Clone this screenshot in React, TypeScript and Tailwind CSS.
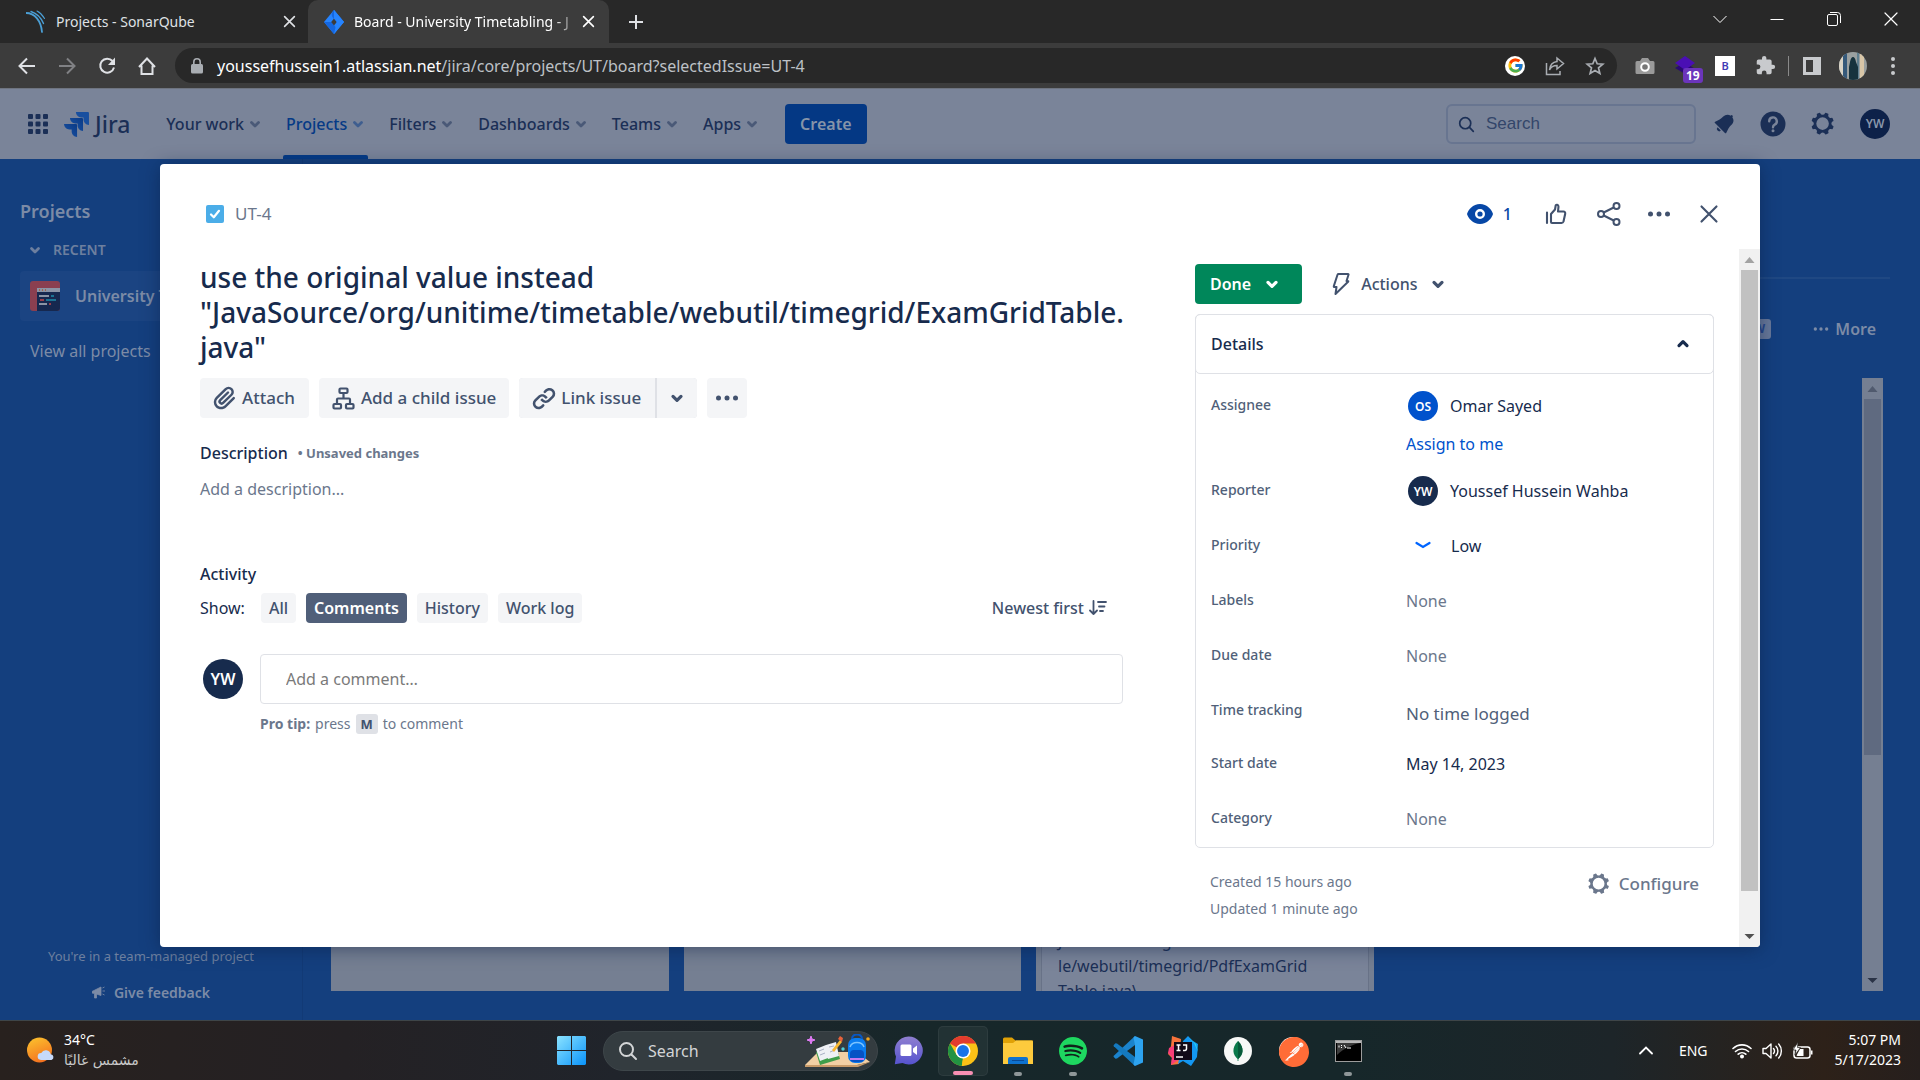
import type { ReactNode } from "react";
import { FcGoogle } from "react-icons/fc";
import { SiSpotify, SiPostman } from "react-icons/si";

const UI = "font-['Noto_Sans','Open_Sans',sans-serif]";

function Chevron({ size = 10, className = "", up = false, w = 2 }: { size?: number; className?: string; up?: boolean; w?: number }) {
  return (
    <svg width={size} height={size} viewBox="0 0 10 10" fill="none" stroke="currentColor" strokeWidth={w} strokeLinecap="round" strokeLinejoin="round" className={className} aria-hidden="true">
      <path d={up ? "M2.500 6 5 3.500l2.500 2.500" : "M2.500 4 5 6.500l2.500-2.500"} />
    </svg>
  );
}

function Cross({ size, w = 1.6 }: { size: number; w?: number }) {
  return (
    <svg width={size} height={size} viewBox="0 0 16 16" stroke="currentColor" strokeWidth={w} strokeLinecap="round" aria-hidden="true">
      <path d="M2 2l12 12M14 2 2 14" />
    </svg>
  );
}

function Dots({ size = 24 }: { size?: number }) {
  return (
    <svg width={size} height={size} viewBox="0 0 24 24" fill="currentColor" aria-hidden="true">
      <circle cx="3.5" cy="12" r="2.5" />
      <circle cx="12" cy="12" r="2.5" />
      <circle cx="20.5" cy="12" r="2.5" />
    </svg>
  );
}

function Gear({ size = 28 }: { size?: number }) {
  return (
    <svg width={size} height={size} viewBox="0 0 24 24" fill="currentColor" aria-hidden="true">
      <path d="M11.701 16.7a5.002 5.002 0 110-10.003 5.002 5.002 0 010 10.004m8.368-3.117a1.995 1.995 0 01-1.346-1.885c0-.876.563-1.613 1.345-1.885a.48.48 0 00.315-.574 8.947 8.947 0 00-.836-1.993.477.477 0 00-.598-.195 2.04 2.04 0 01-1.29.08 1.988 1.988 0 01-1.404-1.395 2.04 2.04 0 01.076-1.297.478.478 0 00-.196-.597 8.98 8.98 0 00-1.975-.826.479.479 0 00-.574.314 1.995 1.995 0 01-1.885 1.346 1.994 1.994 0 01-1.884-1.345.482.482 0 00-.575-.315c-.708.2-1.379.485-2.004.842a.47.47 0 00-.198.582A2.002 2.002 0 014.445 7.06a.478.478 0 00-.595.196 8.946 8.946 0 00-.833 1.994.48.48 0 00.308.572 1.995 1.995 0 011.323 1.877c0 .867-.552 1.599-1.324 1.877a.479.479 0 00-.308.57 8.99 8.99 0 00.723 1.79.477.477 0 00.624.194c.595-.273 1.343-.264 2.104.238.117.077.225.185.302.3.527.8.512 1.58.198 2.188a.473.473 0 00.168.628 8.946 8.946 0 002.11.897.474.474 0 00.57-.313 1.995 1.995 0 011.886-1.353c.878 0 1.618.567 1.887 1.353a.475.475 0 00.57.313 8.964 8.964 0 002.084-.883.473.473 0 00.167-.631c-.318-.608-.337-1.393.191-2.195.077-.116.185-.225.302-.302.772-.511 1.527-.513 2.125-.23a.477.477 0 00.628-.19 8.925 8.925 0 00.728-1.793.478.478 0 00-.314-.573" />
    </svg>
  );
}

function Magnifier({ size, w = 2 }: { size: number; w?: number }) {
  return (
    <svg width={size} height={size} viewBox="0 0 20 20" fill="none" stroke="currentColor" strokeWidth={w} strokeLinecap="round" className="shrink-0" aria-hidden="true">
      <circle cx="8.5" cy="8.5" r="6.5" />
      <path d="M13.5 13.5 18 18" />
    </svg>
  );
}

function JiraDiamond() {
  return (
    <svg width="20" height="24" viewBox="0 0 20 24" className="shrink-0" aria-hidden="true">
      <path d="M10 0 20 12 10 24 0 12z" fill="#2684ff" />
      <path d="M10 0c-3 3-3 6 0 9l2.500 3L20 12z" fill="#1567e0" />
      <path d="M10 24c3-3 3-6 0-9l-2.500-3L0 12z" fill="#1567e0" />
      <path d="M10 8.500 12.800 12 10 15.500 7.200 12z" fill="#3c3c3c" />
      <path d="M10 0 20 12 10 24 12.800 12 10 8.500z" fill="#2684ff" />
    </svg>
  );
}

function BrowserTabs() {
  return (
    <div className="flex h-[43px] items-stretch bg-[#282828] text-[#dfe1e5]">
      <div className="flex w-[308px] items-center pl-[26px] pr-[10px]">
        <svg width="20" height="24" viewBox="0 0 20 24" fill="none" stroke="#4b9fd5" strokeLinecap="round" aria-hidden="true">
          <path d="M0 3c9 0 15 8 16 19" strokeWidth="1.800" />
          <path d="M5 1.500c6 2 10 6 12.500 12" strokeWidth="1.400" />
          <path d="M11 1c3 1.500 5.500 4 7.500 7.500" strokeWidth="1.100" />
        </svg>
        <span className="ml-[10px] flex-1 truncate text-[14px]">Projects - SonarQube</span>
        <button aria-label="Close tab" className="p-[2px]"><Cross size={13} w={2} /></button>
      </div>
      <div className="flex w-[301px] items-center rounded-t-[10px] bg-[#3c3c3c] pl-4 pr-3 text-white">
        <JiraDiamond />
        <span className="ml-[10px] w-[222px] whitespace-nowrap text-[14px] [mask-image:linear-gradient(to_right,black_90%,transparent_102%)]">Board - University Timetabling - J</span>
        <button aria-label="Close tab" className="ml-auto p-[2px]"><Cross size={13} w={2} /></button>
      </div>
      <button aria-label="New tab" className="ml-[18px]">
        <svg width="18" height="18" viewBox="0 0 18 18" stroke="currentColor" strokeWidth="2" aria-hidden="true"><path d="M9 2v14M2 9h14" /></svg>
      </button>
      <div className="ml-auto flex pb-[6px] pr-px text-white">
        <button aria-label="Search tabs" className="grid w-[57px] place-items-center">
          <svg width="14" height="14" viewBox="0 0 14 14" fill="none" stroke="currentColor" aria-hidden="true"><path d="M.5 4 7 10.500 13.500 4" /></svg>
        </button>
        <button aria-label="Minimize" className="grid w-[57px] place-items-center">
          <svg width="14" height="14" viewBox="0 0 14 14" stroke="currentColor" aria-hidden="true"><path d="M.5 7.500h13" /></svg>
        </button>
        <button aria-label="Restore" className="grid w-[57px] place-items-center">
          <svg width="14" height="14" viewBox="0 0 14 14" fill="none" stroke="currentColor" aria-hidden="true"><rect x=".5" y="2.500" width="10" height="11" rx="1.500" /><path d="M3 .5h7.500a3 3 0 0 1 3 3V11" /></svg>
        </button>
        <button aria-label="Close window" className="grid w-[57px] place-items-center"><Cross size={16} w={1.2} /></button>
      </div>
    </div>
  );
}

function BrowserToolbar() {
  return (
    <div className="flex h-[46px] items-center border-b border-[#6e7480] bg-[#3c3c3c] pl-[17px] pr-[25px] text-[#dfe1e5]">
      <div className="flex w-[158px] gap-5">
        <button aria-label="Back"><svg width="20" height="20" viewBox="0 0 20 20" fill="none" stroke="currentColor" strokeWidth="2" aria-hidden="true"><path d="M18 10H3M10 2.500 2.500 10l7.500 7.500" /></svg></button>
        <button aria-label="Forward" className="text-[#808184]"><svg width="20" height="20" viewBox="0 0 20 20" fill="none" stroke="currentColor" strokeWidth="2" aria-hidden="true"><path d="M2 10h15M10 2.500l7.500 7.500-7.500 7.500" /></svg></button>
        <button aria-label="Reload"><svg width="20" height="20" viewBox="0 0 20 20" fill="none" stroke="currentColor" strokeWidth="2" aria-hidden="true"><path d="M17 11.500A7 7 0 1 1 15.500 5" /><path d="M18 1.500V9h-7z" fill="currentColor" stroke="none" /></svg></button>
        <button aria-label="Home"><svg width="20" height="20" viewBox="0 0 20 20" fill="none" stroke="currentColor" strokeWidth="2" aria-hidden="true"><path d="M4.500 9.500V18h11V9.500M2 11l8-8.500 8 8.500" /></svg></button>
      </div>
      <div className="flex h-[35px] flex-1 items-center rounded-full bg-[#282828] pl-4 pr-3">
        <svg width="12" height="16" viewBox="0 0 12 16" fill="#a9adb2" aria-hidden="true"><rect y="6" width="12" height="9.500" rx="1.500" /><path d="M2.800 7V4a3.200 3.200 0 0 1 6.400 0v3" fill="none" stroke="#a9adb2" strokeWidth="1.600" /></svg>
        <p className="ml-[14px] flex-1 text-[16px] text-[#bdc1c6]"><span className="text-white">youssefhussein1.atlassian.net</span>/jira/core/projects/UT/board?selectedIssue=UT-4</p>
        <div className="flex items-center gap-5">
          <span className="grid size-5 place-items-center rounded-full bg-white"><FcGoogle size={17} /></span>
          <button aria-label="Share"><svg width="20" height="20" viewBox="0 0 20 20" fill="none" stroke="#a9adb2" strokeWidth="1.500" aria-hidden="true"><path d="M1.500 7v11.500H15V15M12 5.500V2l6.500 5.500L12 13V9.500c-4 0-6 1-7.500 4.500C5 9 7.500 6 12 5.500z" /></svg></button>
          <button aria-label="Bookmark"><svg width="20" height="20" viewBox="0 0 20 20" fill="none" stroke="#a9adb2" strokeWidth="1.700" aria-hidden="true"><path d="m10 2.500 2.200 5.300 5.600.4-4.300 3.700 1.400 5.600L10 14.500l-4.900 3 1.400-5.600-4.300-3.700 5.600-.4z" /></svg></button>
        </div>
      </div>
      <div className="ml-[18px] flex items-center">
        <svg width="20" height="20" viewBox="0 0 20 20" aria-hidden="true"><path d="M2 5h3l2-3h6l2 3h3a1.500 1.500 0 0 1 1.500 1.500v10A1.500 1.500 0 0 1 18 18H2a1.500 1.500 0 0 1-1.500-1.500v-10A1.500 1.500 0 0 1 2 5z" fill="#9a9a9a" /><circle cx="10" cy="11" r="3.800" fill="#777" stroke="#fff" strokeWidth="2" /></svg>
        <span className="relative ml-5 h-5 w-5">
          <svg width="20" height="20" viewBox="0 0 20 20" aria-hidden="true"><path d="m10 6 10 7-8 6L0 12z" fill="#2a0a72" /><path d="m10 0 10 7-10 7L0 7z" fill="#4a0fb4" /></svg>
          <span className="absolute left-2 top-3 rounded-[3px] bg-[#6b35bb] px-[3px] text-[12px] font-bold leading-[15px] text-white">19</span>
        </span>
        <span className="ml-5 grid h-5 w-5 place-items-center bg-white text-[11px] font-semibold leading-none text-[#3f3bb5]">B</span>
        <svg className="ml-5" width="21" height="21" viewBox="0 0 24 24" fill="#c8cacd" aria-hidden="true"><path d="M20.500 11H19V7a2 2 0 0 0-2-2h-4V3.500a2.500 2.500 0 0 0-5 0V5H4a2 2 0 0 0-2 2v3.800h1.500a2.700 2.700 0 0 1 0 5.400H2V20a2 2 0 0 0 2 2h3.800v-1.500a2.700 2.700 0 0 1 5.400 0V22H17a2 2 0 0 0 2-2v-4h1.500a2.500 2.500 0 0 0 0-5z" /></svg>
        <span className="ml-3 h-5 w-px bg-[#8a8a8a]" />
        <svg className="ml-[14px]" width="18" height="18" viewBox="0 0 18 18" aria-hidden="true"><path d="M0 0h18v18H0z" fill="#c8cacd" /><path d="M3 3h7v12H3z" fill="#3c3c3c" /></svg>
        <svg className="ml-[18px]" width="28" height="28" viewBox="0 0 28 28" aria-hidden="true">
          <defs><clipPath id="profile"><circle cx="14" cy="14" r="14" /></clipPath></defs>
          <g clipPath="url(#profile)"><path d="M0 0h28v28H0z" fill="#9aa0a0" /><path d="M0 0h5v28H0z" fill="#d9d4c7" /><path d="M4 0h4v28H4z" fill="#35597a" /><path d="M18 0h2v28h-2z" fill="#5f7f8f" /><path d="M21 0h4v28h-4z" fill="#d8c6a8" /><path d="M10 28V15l1-5q1-5 3-5t3 5l2 5v13z" fill="#16323d" /></g>
        </svg>
        <svg className="ml-6" width="4" height="18" viewBox="0 0 4 18" fill="#c8cacd" aria-hidden="true"><circle cx="2" cy="2" r="2" /><circle cx="2" cy="9" r="2" /><circle cx="2" cy="16" r="2" /></svg>
      </div>
    </div>
  );
}

const navItems = ["Your work", "Projects", "Filters", "Dashboards", "Teams", "Apps"];

function JiraHeader() {
  return (
    <header className="flex h-[70px] shrink-0 items-center bg-[#7a8499] pl-7 pr-[30px] text-[#1b2f56]">
      <button aria-label="Switch apps">
        <svg width="20" height="20" viewBox="0 0 20 20" fill="currentColor" aria-hidden="true">
          {[0, 7.5, 15].map((y) => [0, 7.5, 15].map((x) => <rect key={`${x}-${y}`} x={x} y={y} width="5" height="5" rx="1" />))}
        </svg>
      </button>
      <a href="#home" className="ml-[15px] flex items-center gap-[5px]">
        <svg width="27" height="27" viewBox="12 12 104 104" aria-hidden="true">
          <defs><linearGradient id="jl" x1="1" y1="0" x2="0" y2="1"><stop offset="0" stopColor="#0a3a86" /><stop offset=".8" stopColor="#184f9f" /></linearGradient></defs>
          <path fill="#184f9f" d="M108.023 16H61.805c0 11.520 9.324 20.848 20.847 20.848h8.500v8.226c0 11.520 9.328 20.848 20.848 20.848V19.977A3.980 3.980 0 00108.023 16z" />
          <path fill="url(#jl)" d="M85.121 39.040H38.902c0 11.519 9.325 20.847 20.844 20.847h8.504v8.226c0 11.520 9.328 20.848 20.848 20.848V43.016a3.983 3.983 0 00-3.977-3.977z" />
          <path fill="url(#jl)" d="M62.219 62.078H16c0 11.524 9.324 20.848 20.848 20.848h8.500v8.230c0 11.520 9.328 20.844 20.847 20.844V66.059a3.984 3.984 0 00-3.976-3.980z" />
        </svg>
        <span className="text-[23px] font-medium leading-none">Jira</span>
      </a>
      <nav className="ml-6 flex items-stretch self-stretch text-[16px] font-medium">
        {navItems.map((item) => (
          <button key={item} className={item === "Projects" ? "relative mx-[9px] flex items-center gap-1 px-[3px] text-[#053a86]" : "mx-3 flex items-center gap-1"}>
            {item}
            <Chevron size={14} className="opacity-50" />
            {item === "Projects" && <span className="absolute inset-x-0 bottom-0 h-1 rounded-t-[2px] bg-[#053a86]" />}
          </button>
        ))}
      </nav>
      <button className="ml-[14px] h-10 rounded-[4px] bg-[#043884] px-[15px] text-[16px] font-semibold text-[#8694a9]">Create</button>
      <label className="ml-auto flex h-10 w-[250px] items-center gap-[11px] rounded-[6px] border-2 border-[#687590] px-[10px]">
        <Magnifier size={17} />
        <input aria-label="Search" placeholder="Search" className="w-full min-w-0 bg-transparent font-['Liberation_Sans',sans-serif] text-[17px] outline-none placeholder:text-[#33466a]" />
      </label>
      <div className="ml-[14px] flex items-center gap-[22px]">
        <button aria-label="Notifications">
          <svg width="28" height="28" viewBox="0 0 24 24" fill="currentColor" aria-hidden="true"><path d="M6.485 17.669a2 2 0 002.829 0l-2.829-2.830a2 2 0 000 2.830zm4.897-12.191l-.725.725c-.782.782-2.210 1.813-3.206 2.311l-3.017 1.509c-.495.248-.584.774-.187 1.171l8.556 8.556c.398.396.922.313 1.171-.188l1.510-3.016c.494-.988 1.526-2.420 2.311-3.206l.725-.726a5.048 5.048 0 00.640-6.356 1.010 1.010 0 10-1.354-1.494c-.023.025-.046.049-.066.075a5.043 5.043 0 00-2.788-.840 5.036 5.036 0 00-3.570 1.478z" /></svg>
        </button>
        <button aria-label="Help">
          <svg width="26" height="26" viewBox="0 0 26 26" aria-hidden="true"><circle cx="13" cy="13" r="12.500" fill="currentColor" /><path d="M9.200 10.200a3.800 3.800 0 1 1 5.500 3.400c-1.200.6-1.700 1.100-1.700 2.600" fill="none" stroke="#7a8499" strokeWidth="2.400" strokeLinecap="round" /><circle cx="13" cy="19.800" r="1.500" fill="#7a8499" /></svg>
        </button>
        <button aria-label="Settings"><Gear size={30} /></button>
        <button aria-label="Profile" className="grid size-[30px] place-items-center rounded-full bg-[#0d2149] text-[12px] font-semibold text-[#8a97ab]">YW</button>
      </div>
    </header>
  );
}

function Sidebar() {
  return (
    <aside className="flex w-[303px] shrink-0 flex-col border-r border-[#123a76] pl-5 pt-[38px] text-[#7c8ba6]">
      <h2 className="text-[18px] font-semibold leading-7">Projects</h2>
      <button className="mt-[13px] flex items-center gap-[11px] pl-2 text-[14px] font-semibold leading-6 text-[#6d7f9f]">
        <Chevron size={14} />
        RECENT
      </button>
      <a href="#project" className="mt-[9px] flex h-[50px] items-center gap-[15px] rounded-[4px] bg-[#1b4482] pl-[10px] text-[16px] font-semibold whitespace-nowrap">
        <svg width="30" height="30" viewBox="0 0 30 30" className="shrink-0" aria-hidden="true">
          <rect width="30" height="30" rx="3" fill="#8a3f50" />
          <path d="M7 7h23v20a3 3 0 0 1-3 3H7z" fill="#16284f" />
          <path d="M7 7h23v4H7z" fill="#8b94a6" />
          <path d="M9 9h1M12 9h1M15 9h1" stroke="#a8552f" strokeWidth="1.500" />
          <path d="M9 15h10M9 23h8" stroke="#8b94a6" strokeWidth="2" />
          <path d="M21 15h3M16 19h10" stroke="#1c7393" strokeWidth="2" />
          <path d="M10 19h4M19 23h2" stroke="#9b3f4c" strokeWidth="2" />
        </svg>
        University T
      </a>
      <a href="#projects" className="mt-4 pl-[10px] text-[16px] leading-7">View all projects</a>
      <div className="mt-auto flex flex-col items-center pb-[15px] pr-5">
        <p className="text-[13px] leading-5 text-[#6d7f9f]">You're in a team-managed project</p>
        <button className="mt-[15px] flex items-center gap-2 text-[14px] font-semibold leading-6">
          <svg width="14" height="14" viewBox="0 0 14 14" fill="currentColor" aria-hidden="true"><path d="M0 5.500 9 1v8.500L4.500 8v4H2.500V7.500L0 7zM10.500 2l2-1M10.500 5H13M10.500 8l2 1" stroke="currentColor" strokeWidth=".8" /></svg>
          Give feedback
        </button>
      </div>
    </aside>
  );
}

function ScrollBar({ track, thumb, upArrow, downArrow, thumbClass, className }: { track: string; thumb: string; upArrow: string; downArrow: string; thumbClass: string; className: string }) {
  return (
    <div className={`flex w-[21px] shrink-0 flex-col items-center ${track} ${className}`} aria-hidden="true">
      <svg width="21" height="21" viewBox="0 0 21 21" className={upArrow} fill="currentColor"><path d="m10.500 8 5 6h-10z" /></svg>
      <div className={`w-[17px] ${thumb} ${thumbClass}`} />
      <svg width="21" height="21" viewBox="0 0 21 21" className={`mt-auto ${downArrow}`} fill="currentColor"><path d="m10.500 13 5-5h-10z" /></svg>
    </div>
  );
}

function Board() {
  return (
    <main className="flex min-w-0 flex-1 flex-col pb-[29px] pl-7 pr-[30px] text-[#7c8ba6]">
      <div className="h-[120px] border-b-2 border-[#1f4883]" />
      <div className="flex h-[99px] items-center justify-end pr-[14px]">
        <span className="grid h-5 w-6 place-items-center rounded-[3px] bg-[#69799a] text-[12px] font-bold text-[#26468a]">W</span>
        <button className="ml-[42px] flex items-center gap-[6px] text-[16px] font-semibold"><Dots size={16} />More</button>
      </div>
      <div className="flex min-h-0 flex-1 gap-[15px] pr-[7px]">
        <div className="w-[338px] bg-[#757f92]" />
        <div className="w-[337px] bg-[#757f92]" />
        <div className="flex w-[338px] flex-col justify-end overflow-hidden bg-[#757f92] px-[5px]">
          <p className="-mb-[13px] flex-1 content-end break-all border-x border-[#687287] bg-[#7a8499] px-4 text-[16px] leading-[25px] text-[#1b2f56]">
            JavaSource/org/unitime/timetab<br />le/webutil/timegrid/PdfExamGrid<br />Table.java\
          </p>
        </div>
        <ScrollBar className="ml-auto" track="bg-[#757f92]" thumb="bg-[#5f6a80]" upArrow="text-[#505a6e]" downArrow="text-[#2a3346]" thumbClass="h-[58%]" />
      </div>
    </main>
  );
}

const BTN = "flex h-10 items-center rounded-[4px] bg-[#f4f5f7] text-[17px] font-medium text-[#42526e]";

function IssueMain() {
  return (
    <section className="flex min-w-0 flex-1 flex-col pb-10 pl-10 pr-[72px] text-[#172b4d]">
      <h1 className="mt-[11px] whitespace-nowrap text-[28px] font-medium leading-[35px]">
        use the original value instead<br />"JavaSource/org/unitime/timetable/webutil/timegrid/ExamGridTable.<br />java"
      </h1>
      <div className="mt-[13px] flex gap-[10px]">
        <button className={`${BTN} gap-[2px] pl-[10px] pr-[14px]`}>
          <svg width="30" height="30" viewBox="0 0 24 24" fill="currentColor" aria-hidden="true"><path d="M11.643 17.965c-1.530 1.495-4.016 1.496-5.542.004a3.773 3.773 0 01.002-5.412l7.147-6.985a2.316 2.316 0 013.233-.003c.893.873.895 2.282.004 3.153l-6.703 6.550a.653.653 0 01-.914-.008.620.620 0 010-.902l6.229-6.087a.941.941 0 000-1.353.995.995 0 00-1.384 0l-6.230 6.087a2.502 2.502 0 000 3.607 2.643 2.643 0 003.683.009l6.703-6.550a4.074 4.074 0 00-.003-5.859 4.306 4.306 0 00-6.002.003l-7.148 6.985a5.655 5.655 0 00-.001 8.118c2.290 2.240 6.015 2.238 8.310-.005l6.686-6.533a.941.941 0 000-1.353.995.995 0 00-1.384 0l-6.686 6.534z" /></svg>
          Attach
        </button>
        <button className={`${BTN} gap-[6px] px-[13px]`}>
          <svg width="23" height="23" viewBox="0 0 23 23" fill="none" stroke="currentColor" strokeWidth="2.200" strokeLinejoin="round" aria-hidden="true"><rect x="7.500" y="1.500" width="8" height="4.500" rx="1" /><rect x="1.500" y="17" width="7.500" height="4.500" rx="1" /><rect x="14" y="17" width="7.500" height="4.500" rx="1" /><path d="M11.500 6v5.500M5 17v-4.500a1 1 0 0 1 1-1h11a1 1 0 0 1 1 1V17" /></svg>
          Add a child issue
        </button>
        <div className="flex gap-[2px] rounded-[4px] bg-[#dfe1e6]">
          <button className={`${BTN} gap-[2px] rounded-r-none pl-[10px] pr-[14px]`}>
            <svg width="30" height="30" viewBox="0 0 24 24" fill="currentColor" aria-hidden="true"><path d="M12.856 5.457l-.937.920a1.002 1.002 0 000 1.437 1.047 1.047 0 001.463 0l.984-.966c.967-.950 2.542-1.135 3.602-.288a2.540 2.540 0 01.203 3.810l-2.903 2.852a2.646 2.646 0 01-3.696 0l-1.110-1.090L9 13.570l1.108 1.089c1.822 1.788 4.802 1.788 6.622 0l2.905-2.852a4.558 4.558 0 00-.357-6.820c-1.893-1.517-4.695-1.226-6.422.470M11.144 19.543l.937-.920a1.002 1.002 0 000-1.437 1.047 1.047 0 00-1.462 0l-.985.966c-.967.950-2.542 1.135-3.602.288a2.540 2.540 0 01-.203-3.810l2.903-2.852a2.646 2.646 0 013.696 0l1.110 1.090L15 11.430l-1.108-1.089c-1.822-1.788-4.802-1.788-6.622 0l-2.905 2.852a4.558 4.558 0 00.357 6.820c1.893 1.517 4.695 1.226 6.422-.470" /></svg>
            Link issue
          </button>
          <button aria-label="More link options" className={`${BTN} w-10 justify-center rounded-l-none`}><Chevron size={16} /></button>
        </div>
        <button aria-label="More actions" className={`${BTN} w-10 justify-center`}><Dots /></button>
      </div>
      <div className="mt-[21px] flex items-center gap-[10px] leading-7">
        <h2 className="text-[16px] font-medium">Description</h2>
        <span className="text-[13px] font-bold text-[#6b778c]">• Unsaved changes</span>
      </div>
      <p className="mt-2 text-[16px] leading-7 text-[#6b778c]">Add a description...</p>
      <h2 className="mt-[57px] text-[16px] font-medium leading-7">Activity</h2>
      <div className="mt-[5px] flex h-[30px] items-center text-[16px]">
        <span className="mr-4">Show:</span>
        <div className="flex gap-[10px] font-medium text-[#42526e]">
          <button className="h-[30px] rounded-[4px] bg-[#f4f5f7] px-2">All</button>
          <button className="h-[30px] rounded-[4px] bg-[#505f79] px-2 font-semibold text-white">Comments</button>
          <button className="h-[30px] rounded-[4px] bg-[#f4f5f7] px-2">History</button>
          <button className="h-[30px] rounded-[4px] bg-[#f4f5f7] px-2">Work log</button>
        </div>
        <button className="ml-auto mr-4 flex items-center gap-[5px] font-medium text-[#42526e]">
          Newest first
          <svg width="18" height="16" viewBox="0 0 18 16" fill="none" stroke="currentColor" strokeWidth="1.800" strokeLinecap="round" strokeLinejoin="round" aria-hidden="true"><path d="M4.500 1v13M1 10.500 4.500 14 8 10.500M9 2h8M10 6.500h5.500M11 11h3" /></svg>
        </button>
      </div>
      <div className="mt-[31px] flex gap-[17px] pl-[3px]">
        <span className="mt-[5px] grid size-10 shrink-0 place-items-center rounded-full bg-[#172b4d] text-[16px] font-semibold text-white">YW</span>
        <div className="min-w-0 flex-1">
          <input aria-label="Add a comment" placeholder="Add a comment…" className="h-[50px] w-full rounded-[4px] border border-[#dfe1e6] px-[25px] text-[16px] outline-none placeholder:text-[#7a7a7a]" />
          <p className="mt-2 flex items-center gap-[5px] text-[14px] leading-6 text-[#6b778c]">
            <b>Pro tip:</b>press<kbd className={`${UI} rounded-[3px] bg-[#dfe1e6] px-[5px] text-[13px] font-bold leading-5 text-[#42526e]`}>M</kbd>to comment
          </p>
        </div>
      </div>
    </section>
  );
}

function Field({ label, height, children }: { label: string; height: string; children: ReactNode }) {
  return (
    <div className={`flex ${height}`}>
      <dt className="w-[195px] shrink-0 text-[14px] font-medium leading-[30px] text-[#505f79]">{label}</dt>
      <dd className="text-[16px] leading-8">{children}</dd>
    </div>
  );
}

function Person({ initials, name, bg }: { initials: string; name: string; bg: string }) {
  return (
    <span className="flex items-center gap-3 pl-[2px]">
      <span className={`grid size-[30px] place-items-center rounded-full text-[12px] font-semibold text-white ${bg}`}>{initials}</span>
      {name}
    </span>
  );
}

function IssueDetails() {
  return (
    <section className="w-[544px] shrink-0 pr-[25px] text-[#172b4d]">
      <div className="mt-[15px] flex">
        <button className="flex h-10 items-center gap-[13px] rounded-[4px] bg-[#00875a] pl-[15px] pr-[22px] text-[16px] font-semibold text-white">Done<Chevron size={16} /></button>
        <button className="ml-[29px] flex items-center text-[16px] font-medium text-[#42526e]">
          <svg width="20" height="24" viewBox="0 0 20 24" fill="none" stroke="currentColor" strokeWidth="2" strokeLinejoin="round" aria-hidden="true"><path d="M7.500 2H17q.8 0 .5.800L15.500 9h1.300q.9 0 .3.800L4.500 22 5.500 15H3.500q-.9 0-.7-.900L6.500 2.800Q6.800 2 7.500 2z" /></svg>
          <span className="ml-[10px] mr-3">Actions</span>
          <Chevron size={16} />
        </button>
      </div>
      <div className="mt-[10px] rounded-[5px] border border-[#dfe1e6]">
        <button className="-m-px flex h-[60px] w-[calc(100%+2px)] items-center justify-between rounded-[5px] border border-[#dfe1e6] pl-[15px] pr-[22px] text-[16px] font-medium">
          Details
          <Chevron size={16} up />
        </button>
        <dl className="pb-3 pl-[15px] pt-[17px]">
          <Field label="Assignee" height="h-[85px]">
            <Person initials="OS" name="Omar Sayed" bg="bg-[#0052cc]" />
            <a href="#assign" className="mt-[6px] block text-[#0052cc]">Assign to me</a>
          </Field>
          <Field label="Reporter" height="h-[55px]"><Person initials="YW" name="Youssef Hussein Wahba" bg="bg-[#172b4d]" /></Field>
          <Field label="Priority" height="h-[55px]"><span className="flex items-center gap-5 pl-[9px]"><svg width="16" height="10" viewBox="0 0 16 10" fill="none" stroke="#0065ff" strokeWidth="2.200" strokeLinecap="round" aria-hidden="true"><path d="m1.500 2 6.500 4 6.500-4" /></svg>Low</span></Field>
          <Field label="Labels" height="h-[55px]"><span className="text-[#6b778c]">None</span></Field>
          <Field label="Due date" height="h-[55px]"><span className="text-[#6b778c]">None</span></Field>
          <Field label="Time tracking" height="h-[53px]"><span className="block pt-[3px] text-[17px] text-[#505f79]">No time logged</span></Field>
          <Field label="Start date" height="h-[55px]">May 14, 2023</Field>
          <Field label="Category" height="h-8"><span className="text-[#6b778c]">None</span></Field>
        </dl>
      </div>
      <div className="mt-5 flex items-start justify-between pl-[15px] pr-[15px] text-[#6b778c]">
        <p className="text-[14px] leading-[27px]">Created 15 hours ago<br />Updated 1 minute ago</p>
        <button className="flex items-center gap-[6px] text-[17px] font-medium leading-8"><Gear size={28} />Configure</button>
      </div>
    </section>
  );
}

function IssueDialog() {
  return (
    <div role="dialog" aria-label="UT-4" className="flex h-full flex-col overflow-hidden rounded-[4px] bg-white shadow-[0_2px_18px_rgba(9,30,66,0.5)]">
      <div className="flex h-[85px] shrink-0 items-center pl-[46px] pr-[41px] pt-[15px] text-[#42526e]">
        <svg width="18" height="18" viewBox="0 0 18 18" aria-hidden="true"><rect width="18" height="18" rx="2" fill="#4bade8" /><path d="m5 9.500 2.800 2.800L13 5.800" fill="none" stroke="#fff" strokeWidth="2.200" strokeLinecap="round" strokeLinejoin="round" /></svg>
        <a href="#UT-4" className="ml-[11px] text-[17px] text-[#6b778c]">UT-4</a>
        <button aria-label="Watchers: 1" className="ml-auto flex items-center gap-[10px] text-[16px] font-medium text-[#0747a6]">
          <svg width="26" height="20" viewBox="0 0 26 20" aria-hidden="true"><path d="M13 0C6 0 1 6 0 10c1 4 6 10 13 10s12-6 13-10C25 6 20 0 13 0z" fill="#0747a6" /><circle cx="13" cy="10" r="3.800" fill="none" stroke="#fff" strokeWidth="2.400" /></svg>
          1
        </button>
        <button aria-label="Vote" className="ml-[33px]">
          <svg width="22" height="22" viewBox="0 0 22 22" fill="none" stroke="currentColor" strokeWidth="2.100" strokeLinejoin="round" strokeLinecap="round" aria-hidden="true"><path d="M2 9.500V20M6 19V11l4-4.500.700-4c.200-1.200 2.800-1 2.800 1.200L13 8.500h5.500a1.800 1.800 0 0 1 1.700 2.200L18.500 18.500A2.200 2.200 0 0 1 16.500 20H7a1 1 0 0 1-1-1z" /></svg>
        </button>
        <button aria-label="Share" className="ml-[30px]">
          <svg width="24" height="24" viewBox="0 0 24 24" fill="none" stroke="currentColor" strokeWidth="2" aria-hidden="true"><circle cx="4" cy="12" r="3" /><circle cx="19.500" cy="4" r="3" /><circle cx="19.500" cy="20" r="3" /><path d="m6.700 10.500 10-5M6.700 13.500l10 5" /></svg>
        </button>
        <button aria-label="More" className="ml-[26px]"><Dots /></button>
        <button aria-label="Close" className="ml-[28px]"><Cross size={20} w={1.7} /></button>
      </div>
      <div className="flex min-h-0 flex-1">
        <IssueMain />
        <IssueDetails />
        <ScrollBar className="h-full" track="bg-[#f1f1f1]" thumb="bg-[#c1c1c1]" upArrow="text-[#a3a3a3]" downArrow="text-[#505050]" thumbClass="h-[89%]" />
      </div>
    </div>
  );
}

function Slot({ label, active, dot, children }: { label: string; active?: boolean; dot?: boolean; children: ReactNode }) {
  return (
    <button aria-label={label} className={active ? "relative grid size-[50px] place-items-center rounded-[5px] border border-white/5 bg-white/5" : "relative grid size-[50px] place-items-center"}>
      {children}
      {active && <span className="absolute bottom-0 left-[14px] h-1 w-5 rounded-full bg-[#f78fb3]" />}
      {dot && <span className="absolute bottom-0 left-[21px] h-1 w-2 rounded-full bg-[#8f9799]" />}
    </button>
  );
}

function Taskbar() {
  return (
    <footer className="flex h-[60px] shrink-0 items-center border-t border-[#3e4548] bg-[linear-gradient(90deg,#28211e_0%,#242124_18%,#20242b_32%,#17272a_48%,#16272a_70%,#1d2529_84%,#2d2119_95%,#261f1d_100%)] text-white">
      <div className="flex flex-1 items-center gap-[9px] pl-[27px]">
        <svg width="28" height="32" viewBox="0 0 28 32" aria-hidden="true">
          <defs><linearGradient id="sun" x1=".2" y1="0" x2=".6" y2="1"><stop offset="0" stopColor="#fbc02d" /><stop offset="1" stopColor="#f4701f" /></linearGradient></defs>
          <circle cx="12.500" cy="15" r="12.500" fill="url(#sun)" />
          <path d="M14 25a3.500 3.500 0 0 1 .3-7 5 5 0 0 1 9.400 1.200A3 3 0 0 1 24.500 25z" fill="#c6dafb" />
        </svg>
        <div className="pb-px text-[14px] leading-5">
          <div>34°C</div>
          <div dir="rtl" className="text-[#c9c9c9] font-['DejaVu_Sans',sans-serif]">مشمس غالبًا</div>
        </div>
      </div>
      <div className="flex items-center pr-[9px]">
        <button aria-label="Start" className="ml-[11px] mr-[17px]">
          <svg width="29" height="29" viewBox="0 0 29 29" aria-hidden="true"><defs><linearGradient id="win" x1="0" y1="0" x2="1" y2="1"><stop offset="0" stopColor="#8be3ff" /><stop offset="1" stopColor="#0a93fa" /></linearGradient></defs><path d="M1 0h13v14H0V1zM15 0h13l1 1v13H15zM0 15h14v14H1l-1-1zM15 15h14v13l-1 1H15z" fill="url(#win)" /></svg>
        </button>
        <div className="flex h-10 w-[275px] items-center rounded-full border border-[#3e464a] bg-[#343c40] pl-[14px] pr-[6px] text-[#d3d5d6]">
          <Magnifier size={20} />
          <input aria-label="Search taskbar" placeholder="Search" className="ml-[10px] w-0 min-w-0 flex-1 bg-transparent text-[16px] outline-none placeholder:text-[#d3d5d6]" />
          <svg width="66" height="34" viewBox="0 0 66 34" aria-hidden="true">
            <path d="M13 18 52 18 65 28 52 31H0z" fill="#f2cfa4" /><path d="M0 31h52l13-3-12 5H0z" fill="#c89a68" />
            <path d="m11 18 20-7 4 14-20 6z" fill="#3f9e4a" /><path d="m11 15 10-4 2 13-8 3zM21 11l10-3 3 14-11 3z" fill="#eef0f5" /><path d="m14 17 5-2m-4 6 5-2m4-6 5-1m-4 6 5-2" stroke="#a9b0c4" />
            <path d="m27 16 8-10 2 2-8 10z" fill="#f7b731" /><path d="m33 5 2-3 3 2-1 4z" fill="#e8633b" />
            <rect x="43" y="4" width="18" height="25" rx="7" fill="#0a7cf0" /><path d="M47 5c0-6 10-6 10 0" fill="none" stroke="#0758c6" strokeWidth="2" /><path d="M45 13c2-6 12-6 14 0" fill="none" stroke="#7cc4ff" strokeWidth="1.500" /><rect x="45" y="16" width="14" height="12" rx="4" fill="#0752c4" /><path d="M45 25h14" stroke="#c67bf0" strokeWidth="2" />
            <path d="m6 2 1 3 3 1-3 1-1 3-1-3-3-1 3-1z" fill="#e07bf5" stroke="#e07bf5" /><circle cx="38" cy="15" r="1.700" fill="#4fd0d8" /><circle cx="63" cy="5" r="1.800" fill="#f3a71c" />
          </svg>
        </div>
        <div className="ml-[5px] flex gap-[5px]">
          <Slot label="Chat">
            <svg width="29" height="29" viewBox="0 0 29 29" aria-hidden="true"><defs><linearGradient id="chat" x1="0" y1="0" x2="0" y2="1"><stop offset="0" stopColor="#8f7fd0" /><stop offset="1" stopColor="#5653cf" /></linearGradient></defs><path d="M14.500.500a14 14 0 1 1-6 26.500L.800 28.200 2 20.500a14 14 0 0 1 12.500-20z" fill="url(#chat)" /><rect x="6.500" y="8.500" width="11" height="11.500" rx="1.500" fill="#fff" /><path d="m19 12.500 4-3v9.500l-4-3z" fill="#fff" /></svg>
          </Slot>
          <Slot label="Chrome" active>
            <svg width="30" height="30" viewBox="0 0 48 48" aria-hidden="true"><circle cx="24" cy="24" r="24" fill="#fbc116" /><path d="M24 24 3.200 12A24 24 0 0 1 44.800 12H24z" fill="#e33b2e" /><path d="M3.200 12 13.600 30 24 36 22 48A24 24 0 0 1 3.200 12z" fill="#229342" /><path d="m24 36 10.400-6L24 48h-2z" fill="#fbc116" /><circle cx="24" cy="24" r="12" fill="#fff" /><circle cx="24" cy="24" r="9.500" fill="#1a73e8" /></svg>
          </Slot>
          <Slot label="File Explorer" dot>
            <svg width="30" height="27" viewBox="0 0 30 27" aria-hidden="true"><path d="M0 2a1.500 1.500 0 0 1 1.500-1.500H9l3.500 3H30V10H0z" fill="#e0a106" /><path d="M0 6h10l3-2.500h15.500A1.500 1.500 0 0 1 30 5v22H0z" fill="#fdca3d" /><path d="M5 27v-5a2 2 0 0 1 2-2h16a2 2 0 0 1 2 2v5z" fill="#0f72cf" /><path d="M9 23.500h12" stroke="#0a4a96" /></svg>
          </Slot>
          <Slot label="Spotify" dot><span className="grid size-7 place-items-center rounded-full bg-[#11221b]"><SiSpotify size={28} color="#1ed760" /></span></Slot>
          <Slot label="Visual Studio Code">
            <svg width="30" height="30" viewBox="0 0 30 30" aria-hidden="true"><path d="M22 0v9L4 22.500l-1.500.2-2-2 .3-1z" fill="#1b83cc" /><path d="M22 30v-9L4 7.500l-1.500-.2-2 2 .3 1z" fill="#1479bf" /><path d="m22 0 8 3.500v23L22 30l-1.500-1.500L22 21V9l-1.500-7.500z" fill="#2da3f0" /></svg>
          </Slot>
          <Slot label="IntelliJ IDEA">
            <svg width="30" height="30" viewBox="0 0 30 30" aria-hidden="true"><path d="m4 0 9 3-2 25-8 1 1-7-4-4 3-8z" fill="#f7733b" /><path d="m1 12 8-4 4 14-10 7 1-8-4-4z" fill="#f83e78" /><path d="m15 5 5-5 5 5 5 3-1 13-6 9-8-5-5 3z" fill="#1397f2" /><path d="m20 1 6 6 4 9-2-8z" fill="#22d0f0" /><path d="M6 6h18v18H6z" fill="#120a18" /><path d="M8.500 9h4m-2 0v5.500m-2 0h4M15 9h3.500v4q0 1.800-3.500 1.500" stroke="#fff" strokeWidth="1.500" fill="none" /><path d="M8 21h7" stroke="#fff" strokeWidth="1.500" /></svg>
          </Slot>
          <Slot label="MongoDB Compass">
            <svg width="28" height="28" viewBox="0 0 28 28" aria-hidden="true"><circle cx="14" cy="14" r="14" fill="#f7f8f7" /><path d="M14 4c7 7 5 14 .400 18v2h-.800v-2C9 18 7 11 14 4z" fill="#0b7a4b" /><path d="M14 4c7 7 5 14 0 18z" fill="#075a3a" /></svg>
          </Slot>
          <Slot label="Postman"><span className="grid size-7 place-items-center rounded-full bg-white"><SiPostman size={30} color="#ff6c37" /></span></Slot>
          <Slot label="Command Prompt" dot>
            <svg width="27" height="22" viewBox="0 0 27 22" aria-hidden="true"><rect x=".5" y=".5" width="26" height="21" fill="#000" stroke="#9c9c9c" /><path d="M1 1h25v2H1z" fill="#b8b8b8" /><path d="M2 3h23c-6 1-16 5-23 12z" fill="#3a3a3a" /><path d="M4 5.500v2M6.500 5v1M6.500 7v1M9 5l2 3M12 8h4" stroke="#fff" /></svg>
          </Slot>
        </div>
      </div>
      <div className="flex flex-1 items-center justify-end pr-[19px] text-[14px]">
        <svg width="14" height="9" viewBox="0 0 14 9" fill="none" stroke="currentColor" strokeWidth="1.800" strokeLinecap="round" aria-hidden="true"><path d="m1 7.500 6-6 6 6" /></svg>
        <span className="ml-[26px]">ENG</span>
        <svg className="ml-6" width="20" height="16" viewBox="0 0 20 16" fill="none" stroke="currentColor" strokeWidth="1.600" strokeLinecap="round" aria-hidden="true"><path d="M1 5.500a13 13 0 0 1 18 0M3.500 8.500a9.500 9.500 0 0 1 13 0M6.200 11.200a5.500 5.500 0 0 1 7.600 0" /><circle cx="10" cy="13.500" r="1.200" fill="currentColor" /></svg>
        <svg className="ml-[10px]" width="21" height="18" viewBox="0 0 21 18" fill="none" stroke="currentColor" strokeWidth="1.400" strokeLinecap="round" strokeLinejoin="round" aria-hidden="true"><path d="M1 6.500h3l5-4.500v14l-5-4.500H1zM11.500 6.500a4 4 0 0 1 0 5M14 4.200a7 7 0 0 1 0 9.600M16.700 2a10.500 10.500 0 0 1 0 14" /></svg>
        <svg className="ml-[10px]" width="20" height="17" viewBox="0 0 20 17" aria-hidden="true"><rect x="1" y="5" width="16" height="11" rx="2.500" fill="none" stroke="currentColor" strokeWidth="1.500" /><path d="M3.500 13.500 7 7h3.500v7h-6zM18 8.500h1.500v4H18z" fill="currentColor" /><path d="M5 0 0 8h3l-1 5 5.500-7.500H4.500z" fill="currentColor" stroke="#231f1c" strokeWidth=".7" /></svg>
        <div className="ml-[22px] pb-px text-right leading-5">5:07 PM<br />5/17/2023</div>
      </div>
    </footer>
  );
}

export default function App() {
  return (
    <div className={`flex h-screen flex-col overflow-hidden ${UI}`}>
      <BrowserTabs />
      <BrowserToolbar />
      <div className="relative flex min-h-0 flex-1 flex-col bg-[#143f7e]">
        <JiraHeader />
        <div className="flex min-h-0 flex-1">
          <Sidebar />
          <Board />
        </div>
        <div className="absolute inset-0 px-40 pb-[73px] pt-[75px]">
          <IssueDialog />
        </div>
      </div>
      <Taskbar />
    </div>
  );
}
